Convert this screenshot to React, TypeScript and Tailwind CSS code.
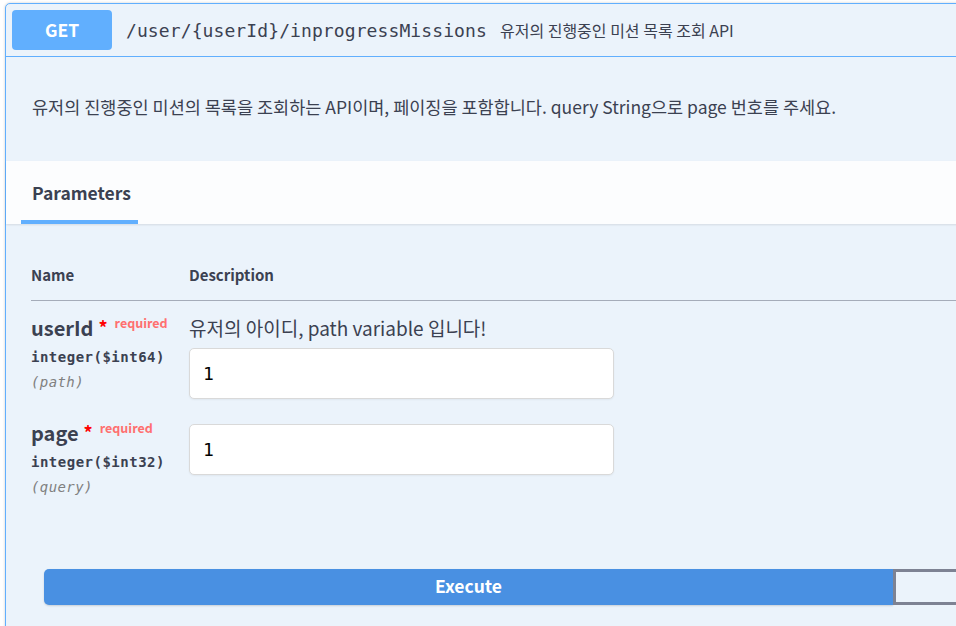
import React from 'react';

const sans = { fontFamily: '"Noto Sans CJK KR", "Noto Sans", sans-serif' };
const mono = { fontFamily: '"DejaVu Sans Mono", "Noto Sans CJK KR", monospace' };

interface Param {
  name: string;
  type: string;
  location: string;
  description?: string;
  value: string;
}

const params: Param[] = [
  { name: 'userId', type: 'integer($int64)', location: '(path)', description: '유저의 아이디, path variable 입니다!', value: '1' },
  { name: 'page', type: 'integer($int32)', location: '(query)', value: '1' },
];

const ParamRow: React.FC<{ p: Param }> = ({ p }) => (
  <div className="flex pt-[12px] pb-[7px]">
    <div className="w-[158px] shrink-0">
      <div className="flex items-start h-[30px]">
        <span className="text-[20px] font-bold text-[#3b4151] leading-[30px]">{p.name}</span>
        <span className="text-[#ff0000] text-[18px] font-bold leading-[26px] ml-[5px] mt-[1px]">*</span>
        <span className="text-[12.5px] font-semibold text-[#ff6f6f] leading-[14px] ml-[7px] mt-[3px]">required</span>
      </div>
      <div style={mono} className="text-[14px] font-semibold tracking-[0.5px] text-[#3b4151] leading-[25px] mt-[2px]">
        {p.type}
      </div>
      <div style={mono} className="text-[14px] italic tracking-[0.4px] text-[#808080] leading-[24px]">
        {p.location}
      </div>
    </div>
    <div className="flex flex-col">
      {p.description ? (
        <div className="text-[19px] text-[#3b4151] leading-[30px] mb-[5px]">{p.description}</div>
      ) : (
        <div className="h-[6px]" />
      )}
      <div className="w-[425px] h-[51px] bg-white border border-[#d9d9d9] rounded-[5px] flex items-center px-[13px] shadow-[0_1px_2px_rgba(0,0,0,0.05)]">
        <span style={mono} className="text-[18px] text-black">{p.value}</span>
      </div>
    </div>
  </div>
);

export default function App() {
  return (
    <div style={sans} className="w-full h-[626px] bg-white overflow-hidden pt-[3px] pl-[5px]">
      <div className="w-[1800px] border border-[#61affe] rounded-[5px] bg-[#ebf3fb] shadow-[0_0_3px_rgba(0,0,0,0.19)]">
        {/* Summary */}
        <div className="flex items-center h-[53px] px-[6px] border-b border-[#61affe]">
          <div className="w-[100px] h-[40px] rounded-[4px] bg-[#61affe] flex items-center justify-center text-white text-[17.5px] font-bold">
            GET
          </div>
          <span style={mono} className="ml-[14px] text-[18px] tracking-[0.1px] text-[#3b4151]">
            /user/{'{userId}'}/inprogressMissions
          </span>
          <span className="ml-[13px] text-[16px] text-[#3b4151]">유저의 진행중인 미션 목록 조회 API</span>
        </div>

        {/* Description */}
        <div className="h-[104px] pt-[37px] px-[26px]">
          <p className="text-[17.5px] leading-[26px] text-[#3b4151]">
            유저의 진행중인 미션의 목록을 조회하는 API이며, 페이징을 포함합니다. query String으로 page 번호를 주세요.
          </p>
        </div>

        {/* Section header */}
        <div className="h-[63px] bg-[#fcfdfe] shadow-[0_1px_2px_rgba(0,0,0,0.1)] flex items-end pl-[15px]">
          <div className="px-[11px] pb-[14px] border-b-[4px] border-[#61affe] text-[17.5px] font-bold text-[#3b4151] leading-[26px] w-[117px]">
            Parameters
          </div>
        </div>

        {/* Table */}
        <div className="pl-[25px] pt-[40px]">
          <div className="flex border-b border-[#a5acb9] pb-[13px]">
            <span className="w-[158px] text-[15px] font-bold text-[#3b4151]">Name</span>
            <span className="text-[15px] font-bold text-[#3b4151]">Description</span>
          </div>
          {params.map((p) => (
            <ParamRow key={p.name} p={p} />
          ))}
        </div>

        {/* Execute */}
        <div className="flex pl-[38px] pt-[63px] pb-[50px]">
          <button className="w-[849px] h-[36px] bg-[#4990e2] text-white text-[17.5px] font-bold rounded-l-[5px] shadow-[0_1px_2px_rgba(0,0,0,0.15)]">
            Execute
          </button>
          <button className="w-[849px] h-[36px] border-[3px] border-[#7d8293] rounded-r-[5px]" aria-label="Clear" />
        </div>
      </div>
    </div>
  );
}
